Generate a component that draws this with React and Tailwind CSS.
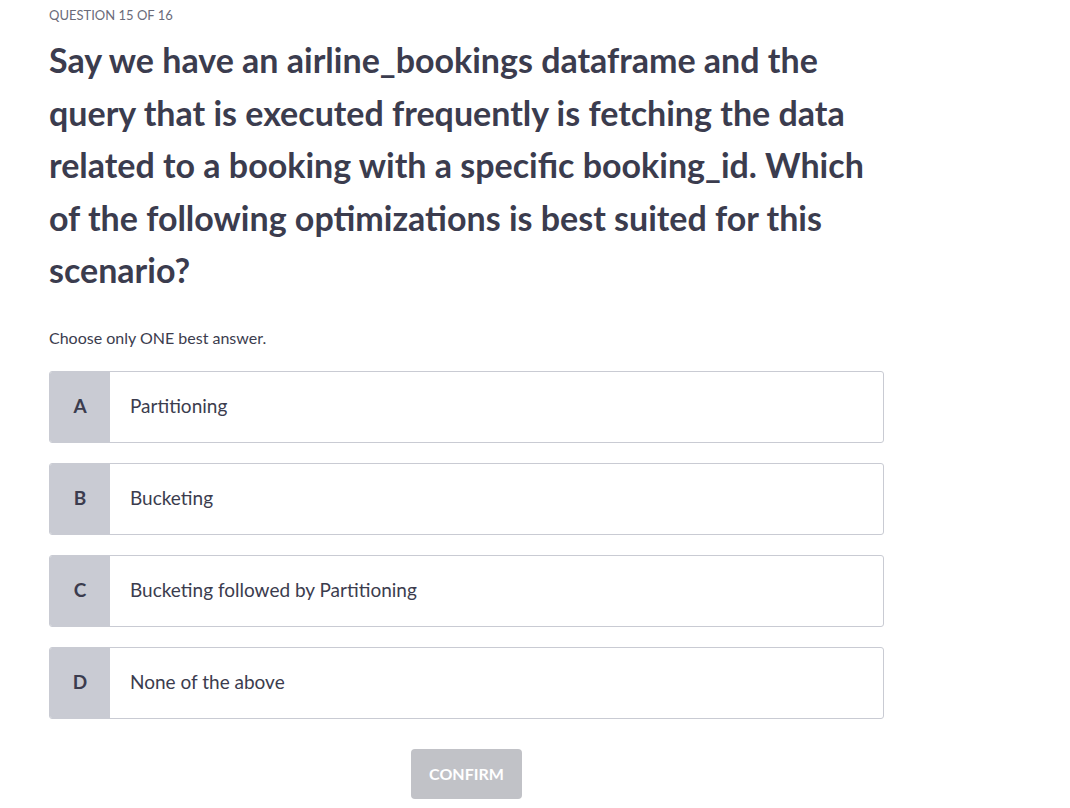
const options = [
  { key: "A", label: "Partitioning" },
  { key: "B", label: "Bucketing" },
  { key: "C", label: "Bucketing followed by Partitioning" },
  { key: "D", label: "None of the above" },
];

export default function App() {
  return (
    <div className="min-h-screen bg-white font-['Lato',sans-serif] text-[#3b3c4e]">
      <div className="w-[835px] ml-[49px] pt-[6px]">
        <p className="text-[13px] uppercase text-[#6a6b7a] leading-[18px]">Question 15 of 16</p>
        <h1 className="mt-[10px] text-[34px] font-bold leading-[52.5px] w-[880px]">
          Say we have an airline_bookings dataframe and the
          <br />
          query that is executed frequently is fetching the data
          <br />
          related to a booking with a specific booking_id. Which
          <br />
          of the following optimizations is best suited for this
          <br />
          scenario?
        </h1>
        <p className="mt-[29px] text-[16px] leading-[24px]">Choose only ONE best answer.</p>

        <div className="mt-[21px] flex flex-col gap-[20px]">
          {options.map((o) => (
            <div key={o.key} className="flex h-[72px] border border-[#c9cbd3] rounded-[3px] overflow-hidden bg-white">
              <div className="w-[60px] bg-[#c9cbd3] flex items-center justify-center text-[19px] font-bold text-[#3b3c4e]">
                {o.key}
              </div>
              <div className="flex items-center pl-[20px] text-[19px]">{o.label}</div>
            </div>
          ))}
        </div>

        <div className="mt-[30px] flex justify-center">
          <button className="w-[111px] h-[50px] rounded-[4px] bg-[#c1c2c7] text-white font-bold text-[16px] uppercase">
            Confirm
          </button>
        </div>
      </div>
    </div>
  );
}
